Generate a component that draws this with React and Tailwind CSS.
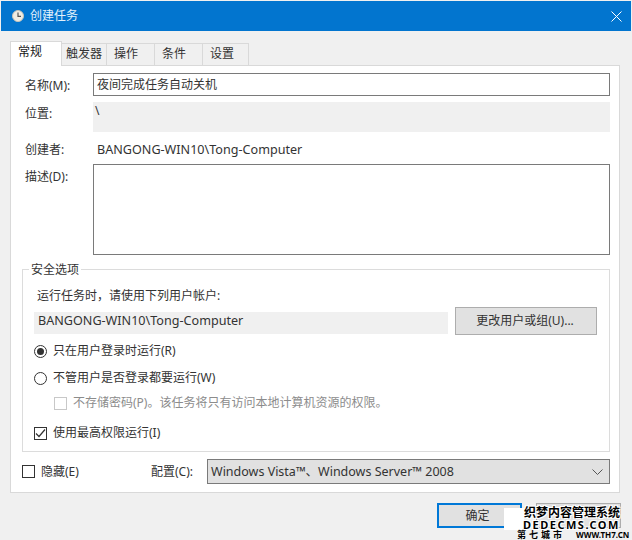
const font = { fontFamily: '"Noto Sans", "Noto Sans CJK SC", sans-serif' };

const Tab = ({ label, active, width, pad }) => (
  <div
    className={
      active
        ? "h-[25px] -mb-px z-10 bg-white border border-b-0 border-[#d9d9d9] pt-[2px] text-[#1a1a1a] " + pad
        : "h-[22px] bg-[#f0f0f0] border border-b-0 border-l-0 border-[#d9d9d9] pt-[2px] text-[#333] " + pad
    }
    style={{ width }}
  >
    {label}
  </div>
);

const Radio = ({ checked }) => (
  <span className="w-[13px] h-[13px] rounded-full border border-[#333] bg-white flex items-center justify-center shrink-0">
    {checked && <span className="w-[7px] h-[7px] rounded-full bg-[#333]" />}
  </span>
);

const Check = ({ checked, disabled }) => (
  <span
    className={
      "w-[13px] h-[13px] border bg-white flex items-center justify-center shrink-0 " +
      (disabled ? "border-[#c8c8c8]" : "border-[#333]")
    }
  >
    {checked && (
      <svg width="11" height="11" viewBox="0 0 11 11" fill="none" stroke="#333" strokeWidth="1.2">
        <path d="M1 5.5 L4 8.5 L10 1.5" />
      </svg>
    )}
  </span>
);

const outline = "[text-shadow:1px_1px_0_#fff,-1px_-1px_0_#fff,1px_-1px_0_#fff,-1px_1px_0_#fff]";

const Watermark = () => (
  <div className="absolute left-[504px] top-[504px] w-[128px] h-[36px] overflow-hidden pointer-events-none font-bold text-black whitespace-nowrap">
    <div className="absolute left-0 top-[4px] w-[20px] h-[22px] bg-white" />
    <div className={"absolute left-[20px] top-[2px] text-[12px] leading-[14px] " + outline}>织梦内容管理系统</div>
    <div className={"absolute left-[19px] top-[16px] text-[11px] leading-[10px] tracking-[1.5px] " + outline}>DEDECMS.COM</div>
    <div className="absolute left-[13px] top-[26px] text-[9px] leading-[9px] tracking-[3px]">第七城市</div>
    <div className="absolute left-[72px] top-[26px] text-[8px] leading-[9px]">WWW.TH7.CN</div>
  </div>
);

export default function App() {
  return (
    <div className="relative w-[632px] h-[540px] overflow-hidden bg-[#f0f0f0] text-[12px] leading-[16px] text-[#333] px-px" style={font}>
      {/* title bar */}
      <div className="h-[30px] mt-px bg-[#0275cf] flex items-center text-white">
        <svg className="ml-[11px]" width="12" height="12" viewBox="0 0 12 12">
          <circle cx="6" cy="6" r="5.5" fill="#f2ede2" stroke="#c9c4b8" />
          <path d="M6 2.5 V6.3 H9" fill="none" stroke="#555" strokeWidth="1.2" />
        </svg>
        <span className="ml-[6px] text-[#e3f1fb]">创建任务</span>
        <svg className="ml-auto mr-[9px]" width="11" height="11" viewBox="0 0 11 11" stroke="#fff" strokeWidth="1">
          <path d="M0.5 0.5 L10.5 10.5 M10.5 0.5 L0.5 10.5" />
        </svg>
      </div>

      {/* tabs */}
      <div className="ml-[9px] mt-[10px] w-[610px] h-[24px] flex items-end">
        <Tab label="常规" active width={52} pad="pl-[7px]" />
        <Tab label="触发器" width={45} pad="pl-[4px]" />
        <Tab label="操作" width={48} pad="pl-[7px]" />
        <Tab label="条件" width={48} pad="pl-[7px]" />
        <Tab label="设置" width={46} pad="pl-[7px]" />
      </div>

      {/* panel */}
      <div className="ml-[9px] w-[610px] h-[428px] bg-white border border-[#d9d9d9] pt-[7px] pl-[11px] pr-[9px]">
        <div className="flex">
          <span className="w-[71px] pl-[3px] pt-[5px]">名称(M):</span>
          <div className="flex-1 h-[23px] border border-[#7a7a7a] pl-[3px] pt-[3px]">夜间完成任务自动关机</div>
        </div>
        <div className="flex mt-[6px]">
          <span className="w-[71px] pl-[3px] pt-[4px]">位置:</span>
          <div className="flex-1 h-[30px] bg-[#f0f0f0] pl-[2px] pt-px">\</div>
        </div>
        <div className="flex mt-[10px] h-[15px]">
          <span className="w-[75px] pl-[3px]">创建者:</span>
          <span className="text-[12.6px]">BANGONG-WIN10\Tong-Computer</span>
        </div>
        <div className="flex mt-[7px]">
          <span className="w-[71px] pl-[3px] pt-[5px]">描述(D):</span>
          <div className="flex-1 h-[91px] border border-[#7a7a7a]" />
        </div>

        {/* security options */}
        <fieldset className="mt-[7px] h-[190px] border border-[#dcdcdc] pl-[11px] pr-[12px]">
          <legend className="-ml-[5px] px-[2px] h-[14px] leading-[16px]">安全选项</legend>
          <div className="mt-[12px] pl-[3px]">运行任务时，请使用下列用户帐户:</div>
          <div className="flex items-start mt-[3px]">
            <div className="mt-[5px] w-[414px] h-[22px] bg-[#f0f0f0] pl-[4px] leading-[18px] text-[12.6px]">BANGONG-WIN10\Tong-Computer</div>
            <button className="ml-[7px] w-[142px] h-[28px] bg-[#e1e1e1] border border-[#adadad] text-[#333] pr-[2px]">更改用户或组(U)...</button>
          </div>
          <div className="flex items-center gap-[6px] mt-[8px]">
            <Radio checked />
            <span>只在用户登录时运行(R)</span>
          </div>
          <div className="flex items-center gap-[6px] mt-[11px]">
            <Radio />
            <span>不管用户是否登录都要运行(W)</span>
          </div>
          <div className="flex items-center gap-[6px] mt-[9px] ml-[20px] text-[#8c8c8c]">
            <Check disabled />
            <span>不存储密码(P)。该任务将只有访问本地计算机资源的权限。</span>
          </div>
          <div className="flex items-center gap-[6px] mt-[14px]">
            <Check checked />
            <span>使用最高权限运行(I)</span>
          </div>
        </fieldset>

        {/* bottom row */}
        <div className="flex items-center mt-[7px]">
          <Check />
          <span className="ml-[6px] w-[110px]">隐藏(E)</span>
          <span className="w-[56px]">配置(C):</span>
          <div className="flex-1 h-[25px] bg-[#e1e1e1] border border-[#7a7a7a] flex items-center pl-[3px] pr-[6px] text-[12.5px]">
            <span>Windows Vista™、Windows Server™ 2008</span>
            <svg className="ml-auto" width="11" height="6" viewBox="0 0 11 6" fill="none" stroke="#555" strokeWidth="1">
              <path d="M0.5 0.5 L5.5 5.5 L10.5 0.5" />
            </svg>
          </div>
        </div>
      </div>

      {/* dialog buttons */}
      <div className="flex mt-[10px] ml-[436px] gap-[14px]">
        <button className="w-[85px] h-[25px] bg-[#e1e1e1] border-2 border-[#0078d7] pr-[4px] text-[#333]">确定</button>
        <div className="w-[85px] h-[25px] bg-[#e1e1e1] border border-[#adadad]" />
      </div>

      <Watermark />
    </div>
  );
}
